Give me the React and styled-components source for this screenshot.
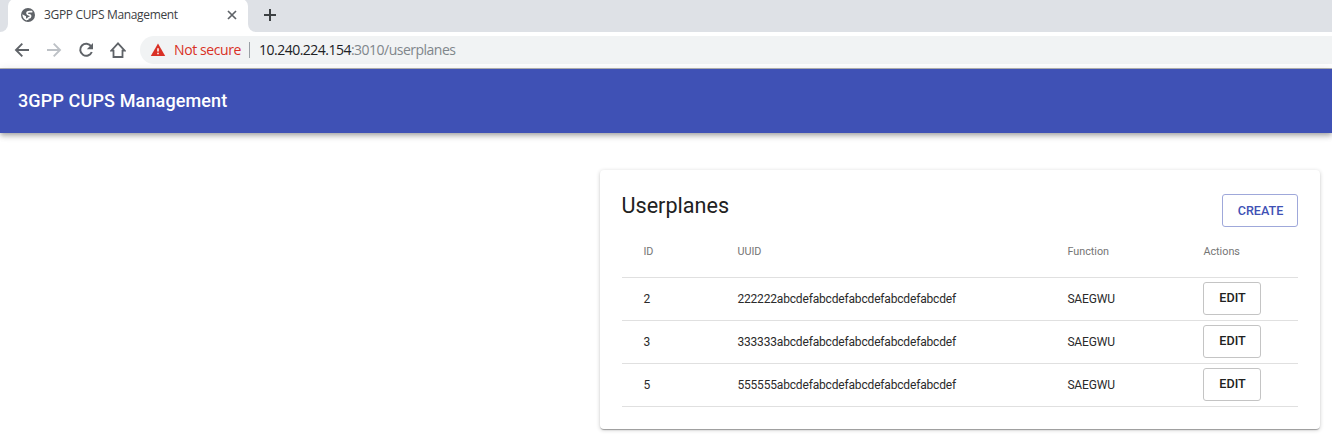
import React from "react";
import styled, { createGlobalStyle } from "styled-components";

const GlobalStyle = createGlobalStyle`
  * { box-sizing: border-box; }
  body { margin: 0; background: #fff; overflow: hidden; font-family: Roboto, "Liberation Sans", sans-serif; }
`;

const Window = styled.div`
  height: 438px;
  display: flex;
  flex-direction: column;
`;

const TabStrip = styled.div`
  height: 32px;
  display: flex;
  background: #fff;
`;

const StripEdge = styled.div`
  width: 8px;
  background: #dee1e6;
  border-bottom-right-radius: 8px;
`;

const Tab = styled.div`
  width: 240px;
  display: flex;
  align-items: center;
  padding: 0 9px 3px 12px;
  color: #3c4043;
  font: 12px/16px "Open Sans", "Noto Sans", sans-serif;
  background: linear-gradient(#dee1e6, #dee1e6) 0 0 / 100% 8px no-repeat;
  position: relative;
  &::before {
    content: "";
    position: absolute;
    inset: 0;
    top: -1px;
    background: #fff;
    border-radius: 7px 7px 0 0;
  }
  > * { position: relative; }
`;

const TabTitle = styled.span`
  flex: 1;
  margin-left: 8px;
  white-space: nowrap;
  letter-spacing: -0.34px;
`;

const StripRest = styled.div`
  flex: 1;
  background: #dee1e6;
  border-bottom-left-radius: 8px;
  padding: 9px 0 0 16px;
`;

const Toolbar = styled.div`
  height: 37px;
  display: flex;
  align-items: center;
  padding-left: 14px;
  background: #fff;
  border-bottom: 1px solid #b4b4b4;
`;

const NavIcons = styled.div`
  display: flex;
  gap: 16px;
  width: 126px;
`;

const AddressBar = styled.div`
  flex: 1;
  height: 28px;
  display: flex;
  align-items: center;
  padding-left: 10px;
  background: #f1f3f4;
  border-radius: 14px 0 0 14px;
  font: 14px/20px "Open Sans", "Noto Sans", sans-serif;
  white-space: nowrap;
`;

const Warning = styled.span`
  width: 67px;
  margin-left: 8px;
  color: #d93025;
  letter-spacing: -0.4px;
`;

const Divider = styled.span`
  width: 1px;
  height: 16px;
  margin: 0 9px 0 8px;
  background: #9aa0a6;
`;

const Url = styled.span`
  color: #80868b;
  letter-spacing: -0.51px;
`;

const Host = styled.span`
  color: #202124;
`;

const AppBar = styled.header`
  height: 64px;
  flex: none;
  display: flex;
  align-items: center;
  padding: 0 0 2px 18px;
  color: #fff;
  background: #3f51b5;
  font-size: 18px;
  font-weight: 500;
  letter-spacing: 0.135px;
  box-shadow: 0 2px 4px -1px rgba(0,0,0,.2), 0 4px 5px rgba(0,0,0,.14), 0 1px 9px rgba(0,0,0,.12);
`;

const Main = styled.main`
  display: flex;
  justify-content: flex-end;
  padding: 37px 12px 0;
`;

const Card = styled.section`
  width: 720px;
  height: 259px;
  padding: 24px 22px 0;
  border-radius: 4px;
  background: #fff;
  box-shadow: 0 2px 1px -1px rgba(0,0,0,.2), 0 1px 1px rgba(0,0,0,.14), 0 1px 4px rgba(0,0,0,.2);
`;

const CardHeader = styled.div`
  height: 33px;
  display: flex;
  justify-content: space-between;
`;

const Title = styled.h2`
  margin: 0 0 0 -0.5px;
  font-size: 21.6px;
  line-height: 24px;
  font-weight: 400;
  color: #212121;
`;

const Button = styled.button`
  width: ${(p) => (p.$primary ? 76 : 58)}px;
  height: 33px;
  padding: 0 0 ${(p) => (p.$primary ? 0 : 2)}px 1px;
  border: 1px solid ${(p) => (p.$primary ? "#9fa8da" : "#c4c4c4")};
  border-radius: 3px;
  background: transparent;
  color: ${(p) => (p.$primary ? "#3f51b5" : "#212121")};
  font: 500 12.6px/20px Roboto, sans-serif;
`;

const Row = styled.div`
  height: ${(p) => (p.$head ? 51 : 43)}px;
  display: grid;
  grid-template-columns: 94px 330px 136px 1fr;
  align-items: center;
  padding: 0 0 ${(p) => (p.$head ? 2 : 0)}px 21.4px;
  border-bottom: 1px solid #e0e0e0;
  color: ${(p) => (p.$head ? "#757575" : "#2a2a2a")};
  font-size: ${(p) => (p.$head ? 10.8 : 12)}px;
  letter-spacing: ${(p) => (p.$head ? 0 : -0.17)}px;
  white-space: nowrap;
`;

const Cell = styled.span``;

const Action = styled.span`
  display: flex;
  margin-left: -0.4px;
  padding-bottom: 1px;
`;

const Globe = () => (
  <svg width="16" height="16" viewBox="0 0 16 16">
    <circle cx="8" cy="8" r="7" fill="#5f6368" />
    <path d="M12.4 4.6H9.6C8 4.6 7 5.3 7 6.3s.8 1.3 2 1.5c1.300.2 1.700.8 1.500 1.700-.2 1-1 1.300-2 1.400-.7.1-.9.7-.9 2.200" fill="none" stroke="#fff" strokeWidth="1.7" />
    <path d="M2.400 7.300 6 9.200v1.500l1 1.200v1.600A5.700 5.700 0 0 1 2.400 7.300z" fill="#fff" />
  </svg>
);

const Close = () => (
  <svg width="14" height="14" viewBox="0 0 14 14" stroke="#5f6368" strokeWidth="1.7">
    <path d="M3 3l8 8M11 3l-8 8" />
  </svg>
);

const Plus = () => (
  <svg width="12" height="12" viewBox="0 0 12 12" stroke="#3c4043" strokeWidth="2" display="block">
    <path d="M6 0v12M0 6h12" />
  </svg>
);

const Arrow = ({ forward }) => (
  <svg width="16" height="16" viewBox="0 0 16 16" fill="none" stroke={forward ? "#bdc1c6" : "#5f6368"} strokeWidth="1.9">
    <path d={forward ? "M1 8h13M7.7 1.7 14 8l-6.3 6.3" : "M15 8H2M8.3 1.7 2 8l6.3 6.3"} />
  </svg>
);

const Reload = () => (
  <svg width="16" height="16" viewBox="0 0 16 16">
    <path d="M13.2 4.4A6 6 0 1 0 13.8 10" fill="none" stroke="#5f6368" strokeWidth="2" />
    <path d="M15 1v6.2H8.8z" fill="#5f6368" />
  </svg>
);

const Home = () => (
  <svg width="16" height="16" viewBox="0 0 16 16" fill="none" stroke="#5f6368" strokeWidth="1.8">
    <path d="M8 1.4 1.300 8.600H3.500V15h9V8.600h2.200z" />
  </svg>
);

const Alert = () => (
  <svg width="16" height="16" viewBox="0 0 16 16">
    <path d="M8 1.5 15.2 14H.8z" fill="#d93025" />
    <path d="M8 6.2v3.3M8 10.7v1.5" stroke="#fff" strokeWidth="1.5" />
  </svg>
);

const userplanes = [
  { id: 2, uuid: "222222abcdefabcdefabcdefabcdefabcdef", role: "SAEGWU" },
  { id: 3, uuid: "333333abcdefabcdefabcdefabcdefabcdef", role: "SAEGWU" },
  { id: 5, uuid: "555555abcdefabcdefabcdefabcdefabcdef", role: "SAEGWU" },
];

export default function App() {
  return (
    <Window>
      <GlobalStyle />
      <TabStrip>
        <StripEdge />
        <Tab>
          <Globe />
          <TabTitle>3GPP CUPS Management</TabTitle>
          <Close />
        </Tab>
        <StripRest><Plus /></StripRest>
      </TabStrip>
      <Toolbar>
        <NavIcons>
          <Arrow />
          <Arrow forward />
          <Reload />
          <Home />
        </NavIcons>
        <AddressBar>
          <Alert />
          <Warning>Not secure</Warning>
          <Divider />
          <Url><Host>10.240.224.154</Host>:3010/userplanes</Url>
        </AddressBar>
      </Toolbar>
      <AppBar>3GPP CUPS Management</AppBar>
      <Main>
        <Card>
          <CardHeader>
            <Title>Userplanes</Title>
            <Button $primary>CREATE</Button>
          </CardHeader>
          <Row $head>
            <Cell>ID</Cell>
            <Cell>UUID</Cell>
            <Cell>Function</Cell>
            <Cell>Actions</Cell>
          </Row>
          {userplanes.map((item) => (
            <Row key={item.id}>
              <Cell>{item.id}</Cell>
              <Cell>{item.uuid}</Cell>
              <Cell>{item.role}</Cell>
              <Action><Button>EDIT</Button></Action>
            </Row>
          ))}
        </Card>
      </Main>
    </Window>
  );
}
